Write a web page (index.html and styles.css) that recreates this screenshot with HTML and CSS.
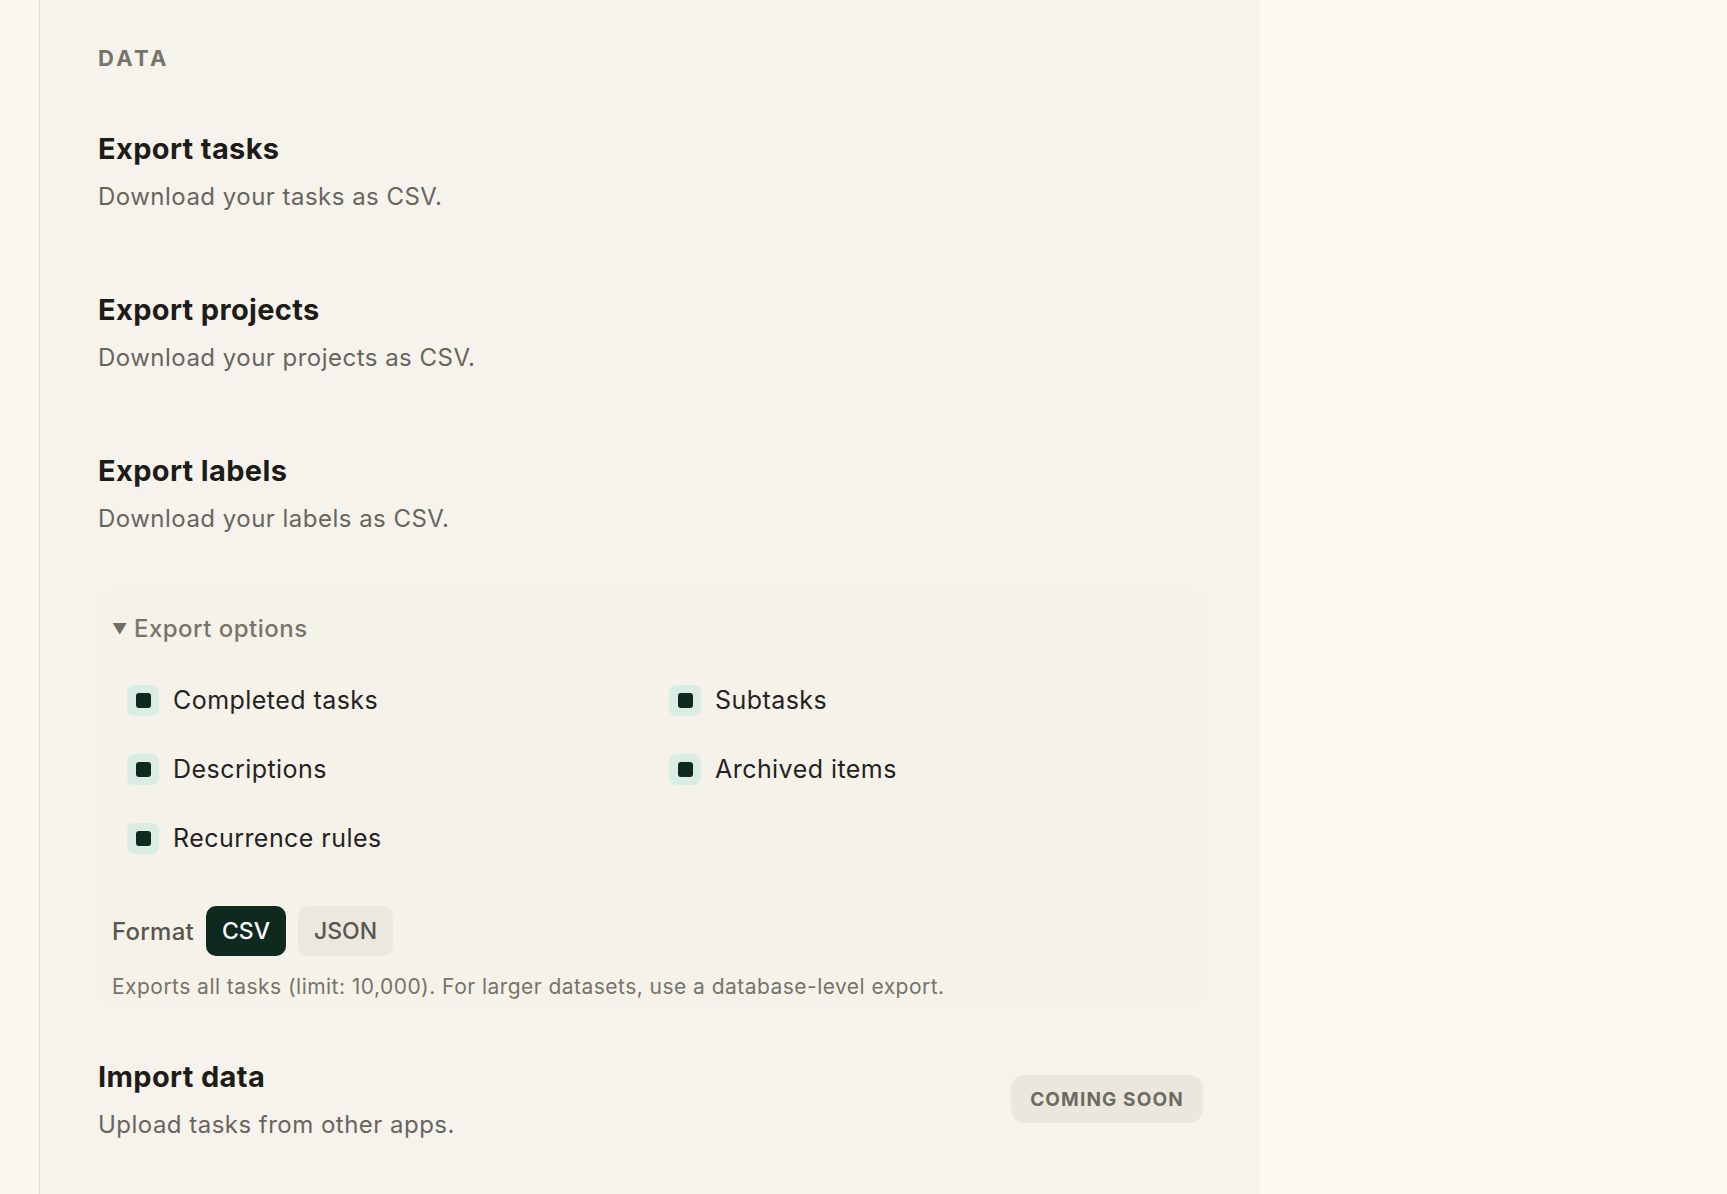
FILE: index.html
```html
<!DOCTYPE html>
<html lang="en">
<head>
<meta charset="utf-8">
<title>Settings · Data</title>
<link rel="stylesheet" href="styles.css">
</head>
<body>
<div class="layout">
  <aside class="rail"></aside>
  <main class="panel">
    <h2 class="section-label">DATA</h2>

    <div class="setting">
      <div class="setting-text">
        <h3 class="setting-title">Export tasks</h3>
        <p class="setting-desc">Download your tasks as CSV.</p>
      </div>
    </div>

    <div class="setting">
      <div class="setting-text">
        <h3 class="setting-title">Export projects</h3>
        <p class="setting-desc">Download your projects as CSV.</p>
      </div>
    </div>

    <div class="setting">
      <div class="setting-text">
        <h3 class="setting-title">Export labels</h3>
        <p class="setting-desc">Download your labels as CSV.</p>
      </div>
    </div>

    <details class="options" open>
      <summary class="options-summary"><span class="caret">▼</span>Export options</summary>
      <div class="option-grid">
        <label class="option"><span class="check"><span class="check-mark"></span></span>Completed tasks</label>
        <label class="option"><span class="check"><span class="check-mark"></span></span>Subtasks</label>
        <label class="option"><span class="check"><span class="check-mark"></span></span>Descriptions</label>
        <label class="option"><span class="check"><span class="check-mark"></span></span>Archived items</label>
        <label class="option"><span class="check"><span class="check-mark"></span></span>Recurrence rules</label>
      </div>
      <div class="format-row">
        <span class="format-label">Format</span>
        <button class="fmt fmt-active" type="button">CSV</button>
        <button class="fmt" type="button">JSON</button>
      </div>
      <p class="hint">Exports all tasks (limit: 10,000). For larger datasets, use a database-level export.</p>
    </details>

    <div class="setting setting-import">
      <div class="setting-text">
        <h3 class="setting-title">Import data</h3>
        <p class="setting-desc">Upload tasks from other apps.</p>
      </div>
      <span class="badge">COMING SOON</span>
    </div>
  </main>
  <div class="aside-fill"></div>
</div>
</body>
</html>
```

FILE: styles.css
```css
* { box-sizing: border-box; }

html, body {
  margin: 0;
  height: 100%;
}

body {
  font-family: Inter, "Noto Sans", "Liberation Sans", sans-serif;
  background: #fbf8ee;
  color: #1f1e1a;
  overflow: hidden;
}

.layout {
  display: flex;
  height: 1194px;
}

.rail {
  width: 40px;
  flex: none;
  background: #faf7ee;
  border-right: 1px solid #e2ded4;
}

.panel {
  width: 1220px;
  flex: none;
  background: #f6f3ec;
  padding: 43px 57px 0 58px;
}

.aside-fill {
  flex: 1;
  background: #fbf9ef;
}

.section-label {
  margin: 0 0 56px;
  font-size: 22px;
  line-height: 30px;
  font-weight: 700;
  letter-spacing: 0.15em;
  color: #75746a;
}

.setting {
  display: flex;
  align-items: center;
  justify-content: space-between;
  margin-bottom: 75px;
}

.setting-title {
  margin: 0 0 10px;
  font-size: 29px;
  line-height: 40px;
  font-weight: 700;
  letter-spacing: 0.012em;
  color: #1d1c18;
}

.setting-desc {
  margin: 0;
  font-size: 24px;
  line-height: 36px;
  font-weight: 400;
  letter-spacing: 0.02em;
  color: #67665d;
}

/* collapsible export options */
.options {
  margin: -22px 0 54px;
  padding: 21px 14px 1px;
  background: #f5f2ea;
  border-radius: 10px;
}

.options-summary {
  list-style: none;
  display: flex;
  align-items: center;
  font-size: 24px;
  line-height: 36px;
  font-weight: 500;
  letter-spacing: 0.02em;
  color: #77766b;
  cursor: pointer;
}

.options-summary::-webkit-details-marker { display: none; }

.caret {
  font-size: 15px;
  width: 22px;
  letter-spacing: 0;
  color: #6f6e64;
}

.option-grid {
  display: grid;
  grid-template-columns: 542px 1fr;
  row-gap: 37px;
  margin: 37px 0 0 15px;
}

.option {
  display: flex;
  align-items: center;
  gap: 14px;
  height: 32px;
  font-size: 25px;
  letter-spacing: 0.018em;
  color: #24231f;
}

.check {
  width: 32px;
  height: 31px;
  flex: none;
  display: flex;
  align-items: center;
  justify-content: center;
  background: #daede3;
  border-radius: 7px;
}

.check-mark {
  width: 15px;
  height: 15px;
  background: #0e2a1e;
  border-radius: 3px;
}

.format-row {
  display: flex;
  align-items: center;
  gap: 12px;
  margin-top: 52px;
}

.format-label {
  font-size: 24px;
  font-weight: 500;
  letter-spacing: 0.01em;
  color: #58574e;
}

.fmt {
  height: 50px;
  padding: 0 16px;
  border: none;
  border-radius: 10px;
  background: #ebe8e0;
  color: #58574e;
  font-family: inherit;
  font-size: 23px;
  font-weight: 500;
}

.fmt-active {
  background: #0e2a1e;
  color: #ffffff;
}

.hint {
  margin: 16px 0 0;
  font-size: 21px;
  line-height: 30px;
  letter-spacing: 0.022em;
  color: #75746a;
}

.setting-import { margin-bottom: 0; }

.badge {
  display: inline-flex;
  align-items: center;
  justify-content: center;
  width: 192px;
  height: 48px;
  margin-top: -2px;
  border-radius: 14px;
  background: #ebe7df;
  color: #6c6b60;
  font-size: 19px;
  font-weight: 700;
  letter-spacing: 0.06em;
}
```
